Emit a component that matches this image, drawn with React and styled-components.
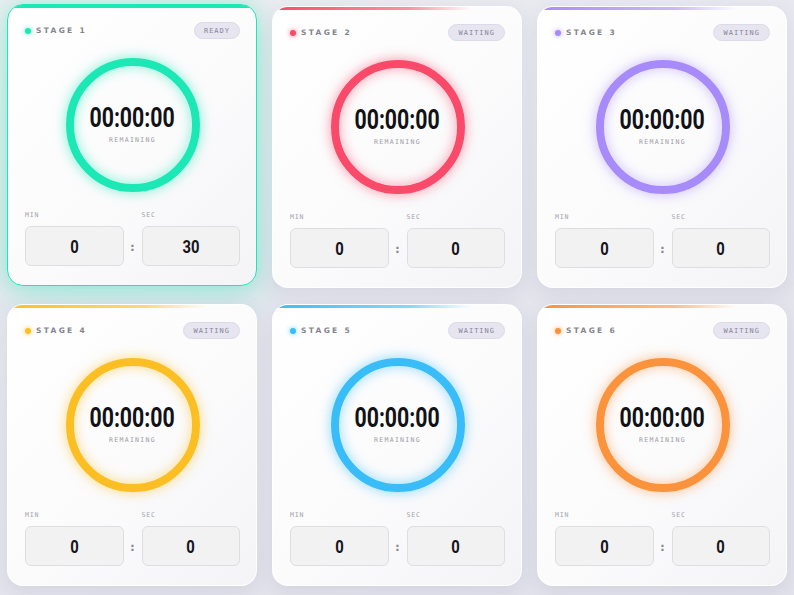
import React from 'react';
import styled, { createGlobalStyle, css } from 'styled-components';

const GlobalStyle = createGlobalStyle`
  html, body {
    margin: 0;
    padding: 0;
    background: #e6e6ee;
  }
  * { box-sizing: border-box; }
`;

const stages = [
  { id: 1, color: '#1ce8b5', glow: '28,232,181', status: 'READY', min: 0, sec: 30, active: true },
  { id: 2, color: '#fa4a6a', glow: '250,74,106', status: 'WAITING', min: 0, sec: 0 },
  { id: 3, color: '#a78bfa', glow: '167,139,250', status: 'WAITING', min: 0, sec: 0 },
  { id: 4, color: '#fbbf24', glow: '251,191,36', status: 'WAITING', min: 0, sec: 0 },
  { id: 5, color: '#38bdf8', glow: '56,189,248', status: 'WAITING', min: 0, sec: 0 },
  { id: 6, color: '#fb923c', glow: '251,146,60', status: 'WAITING', min: 0, sec: 0 },
];

const Board = styled.div`
  width: 794px;
  height: 595px;
  padding: 6px 7px;
  display: grid;
  grid-template-columns: repeat(3, 1fr);
  grid-auto-rows: 282px;
  column-gap: 15px;
  row-gap: 16px;
  background: linear-gradient(160deg, #eceef1 0%, #e5e5ee 50%, #e2e2ec 100%);
`;

const Card = styled.div`
  position: relative;
  overflow: hidden;
  display: flex;
  flex-direction: column;
  padding: 17px 16px 20px 17px;
  border-radius: 16px;
  background: linear-gradient(135deg, #ffffff 0%, #fbfbfc 55%, #f4f4f7 100%);
  box-shadow: 0 6px 18px rgba(120, 120, 150, 0.14);
  border: 1px solid rgba(255, 255, 255, 0.9);

  &::before {
    content: '';
    position: absolute;
    left: 0;
    right: 0;
    top: 0;
    height: 3px;
    background: linear-gradient(90deg, ${p => p.$color} 0%, rgba(${p => p.$glow}, 0.6) 55%, rgba(${p => p.$glow}, 0) 80%);
  }

  ${p => p.$active && css`
    transform: translateY(-2px);
    border: 1px solid ${p.$color};
    box-shadow: 0 12px 40px rgba(${p.$glow}, 0.28), 0 0 16px rgba(${p.$glow}, 0.25);
    &::before {
      background: ${p.$color};
    }
  `}
`;

const Header = styled.div`
  height: 17px;
  display: flex;
  align-items: center;
  justify-content: space-between;
`;

const StageName = styled.div`
  display: flex;
  align-items: center;
  gap: 5px;
  font-family: 'DejaVu Sans', sans-serif;
  font-weight: bold;
  font-size: 7.5px;
  letter-spacing: 2.3px;
  color: #84848c;
`;

const Dot = styled.span`
  width: 6px;
  height: 6px;
  border-radius: 50%;
  background: ${p => p.$color};
  box-shadow: 0 0 5px rgba(${p => p.$glow}, 0.8);
`;

const Badge = styled.span`
  height: 17px;
  padding: 0 9px;
  display: flex;
  align-items: center;
  border-radius: 9px;
  background: #e7e5f0;
  border: 1px solid #dcdae8;
  font-family: 'DejaVu Sans Mono', monospace;
  font-size: 7px;
  letter-spacing: 1px;
  color: #86849a;
`;

const RingWrap = styled.div`
  margin-top: 19px;
  display: flex;
  justify-content: center;
`;

const Ring = styled.div`
  width: 134px;
  height: 134px;
  border-radius: 50%;
  border: 8px solid ${p => p.$color};
  box-shadow: 0 0 12px 1px rgba(${p => p.$glow}, 0.5), inset 0 0 12px 1px rgba(${p => p.$glow}, 0.45);
  display: flex;
  flex-direction: column;
  align-items: center;
  justify-content: center;
`;

const Time = styled.div`
  font-family: Roboto, 'DejaVu Sans', sans-serif;
  font-weight: 700;
  font-size: 28px;
  line-height: 1;
  color: #111116;
  margin-top: -2px;
  transform: scaleX(0.76);
`;

const Caption = styled.div`
  margin-top: 4px;
  font-family: 'DejaVu Sans Mono', monospace;
  font-size: 6.5px;
  letter-spacing: 1.3px;
  color: #9a9aa2;
`;

const Fields = styled.div`
  margin-top: 19px;
  display: grid;
  grid-template-columns: 1fr 18px 1fr;
  grid-template-rows: 9px 40px;
  row-gap: 6px;
`;

const FieldLabel = styled.div`
  grid-column: ${p => p.$col};
  font-family: 'DejaVu Sans Mono', monospace;
  font-size: 6.5px;
  letter-spacing: 0.8px;
  color: #a2a2aa;
  line-height: 9px;
`;

const Field = styled.div`
  grid-column: ${p => p.$col};
  grid-row: 2;
  display: flex;
  align-items: center;
  justify-content: center;
  border-radius: 6px;
  background: #f2f2f3;
  border: 1px solid #dedee2;
`;

const FieldValue = styled.span`
  font-family: Roboto, 'DejaVu Sans', sans-serif;
  font-weight: 700;
  font-size: 19px;
  color: #16161c;
  transform: scaleX(0.78);
`;

const Colon = styled.div`
  grid-column: 2;
  grid-row: 2;
  display: flex;
  align-items: center;
  justify-content: center;
  font-family: 'DejaVu Sans Mono', monospace;
  font-weight: bold;
  font-size: 13px;
  color: #8a8a92;
`;

const StageCard = ({ stage }) => (
  <Card $color={stage.color} $glow={stage.glow} $active={stage.active}>
    <Header>
      <StageName>
        <Dot $color={stage.color} $glow={stage.glow} />
        STAGE {stage.id}
      </StageName>
      <Badge>{stage.status}</Badge>
    </Header>
    <RingWrap>
      <Ring $color={stage.color} $glow={stage.glow}>
        <Time>00:00:00</Time>
        <Caption>REMAINING</Caption>
      </Ring>
    </RingWrap>
    <Fields>
      <FieldLabel $col={1}>MIN</FieldLabel>
      <FieldLabel $col={3}>SEC</FieldLabel>
      <Field $col={1}><FieldValue>{stage.min}</FieldValue></Field>
      <Colon>:</Colon>
      <Field $col={3}><FieldValue>{stage.sec}</FieldValue></Field>
    </Fields>
  </Card>
);

export default function App() {
  return (
    <>
      <GlobalStyle />
      <Board>
        {stages.map(s => <StageCard key={s.id} stage={s} />)}
      </Board>
    </>
  );
}
